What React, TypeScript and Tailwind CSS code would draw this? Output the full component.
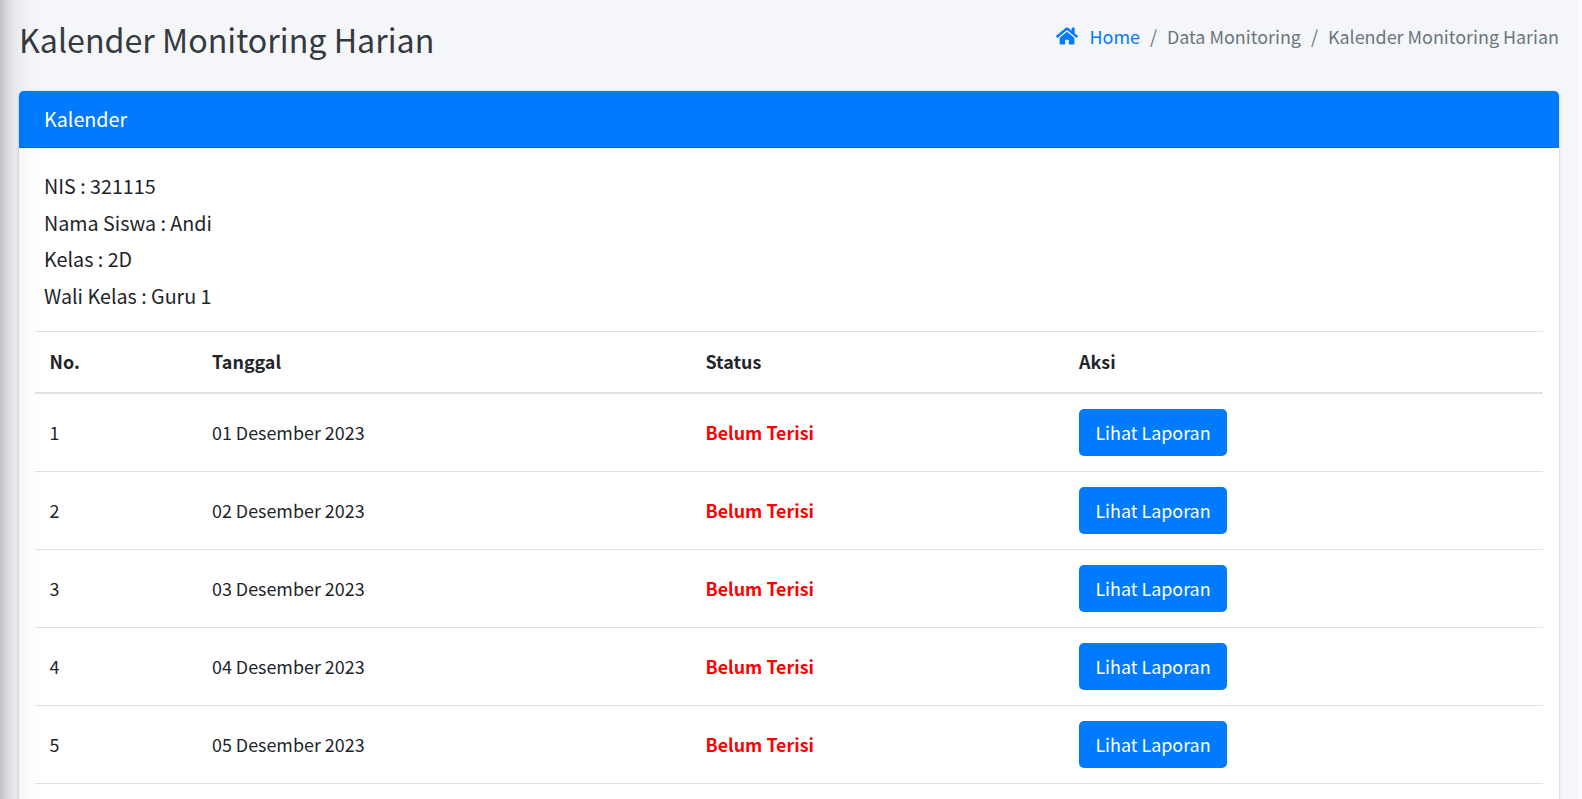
import { FaHome } from "react-icons/fa";

const rows = ["01", "02", "03", "04", "05"];

export default function App() {
  return (
    <div className="relative h-[799px] w-[1582px] overflow-hidden border-r-4 border-[#fafafa] bg-[#f4f6f9] font-['Noto_Sans_CJK_SC',sans-serif] text-[#212529]">
      <header className="flex h-[91px] items-start justify-between pl-[19px] pr-[19px]">
        <h1 className="pt-[12px] text-[32.2px] leading-[54px] whitespace-nowrap text-[#343a40]">Kalender Monitoring Harian</h1>
        <nav className="flex items-center pt-[21px] text-[17.92px] leading-[30px] whitespace-nowrap text-[#6c757d]">
          <FaHome className="mr-[12px] h-[20px] w-[22px] text-[#007bff]" />
          <span className="text-[#007bff]">Home</span>
          <span className="px-[10px]">/</span>
          <span>Data Monitoring</span>
          <span className="px-[10px]">/</span>
          <span>Kalender Monitoring Harian</span>
        </nav>
      </header>
      <main className="mr-[19px] ml-[19px] h-[760px] rounded-[5px] bg-white shadow-[0_0_1px_rgba(0,0,0,0.125),0_1px_3px_rgba(0,0,0,0.2)]">
        <div className="h-[57px] rounded-t-[5px] border-b border-[#006fe6] bg-[#007bff] px-[25px] text-[19.7px] leading-[56px] text-white">Kalender</div>
        <div className="px-[25px] pt-[20px] text-[19.7px] leading-[36.6px]">
          <p>NIS : 321115</p>
          <p>Nama Siswa : Andi</p>
          <p>Kelas : 2D</p>
          <p>Wali Kelas : Guru 1</p>
        </div>
        <div className="mt-[16.6px] px-4 text-[17.9px]">
          <div className="grid h-[63px] grid-cols-[162.5px_493.5px_373.5px_1fr] items-center border-t border-b-2 border-[#dee2e6] pb-px pl-[14.5px] font-bold">
            <span>No.</span><span>Tanggal</span><span>Status</span><span>Aksi</span>
          </div>
          {rows.map((d, i) => (
            <div key={d} className="grid h-[78px] grid-cols-[162.5px_493.5px_373.5px_1fr] items-center border-b border-[#dee2e6] pl-[14.5px]">
              <span>{i + 1}</span>
              <span>{d} Desember 2023</span>
              <span className="font-bold text-[#ff0000]">Belum Terisi</span>
              <button className="h-[47px] w-[148px] rounded-[5px] bg-[#007bff] text-white">Lihat Laporan</button>
            </div>
          ))}
        </div>
      </main>
      <div className="pointer-events-none absolute -top-[100px] right-full h-[1100px] w-[300px] shadow-[0_17.5px_35px_rgba(0,0,0,0.25),0_12.5px_12.5px_rgba(0,0,0,0.22)]" />
    </div>
  );
}
